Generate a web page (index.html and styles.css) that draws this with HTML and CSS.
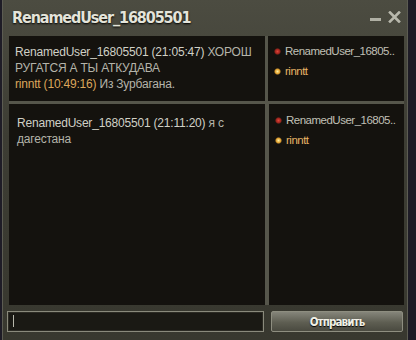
FILE: index.html
```html
<!DOCTYPE html>
<html lang="ru">
<head>
    <meta charset="UTF-8">
    <title>RenamedUser_16805501</title>
    <link rel="stylesheet" href="styles.css">
</head>
<body>
    <div class="window">
        <div class="titlebar">
            <div class="title">RenamedUser_16805501</div>
            <div class="controls">
                <span class="minimize"></span>
                <svg class="close" width="13" height="12" viewBox="0 0 13 12">
                    <path d="M2 1.5 L11 10.5 M11 1.5 L2 10.5" stroke="#b8b8ac" stroke-width="2.6" stroke-linecap="square"/>
                </svg>
            </div>
        </div>

        <div class="rooms">
            <!-- first room -->
            <div class="chat chat-top">
                <div class="msg"><span class="name">RenamedUser_16805501 (21:05:47)</span> ХОРОШ РУГАТСЯ А ТЫ АТКУДАВА</div>
                <div class="msg"><span class="name me">rinntt (10:49:16)</span> Из Зурбагана.</div>
            </div>
            <div class="users users-top">
                <div class="user"><span class="dot red"></span>RenamedUser_16805..</div>
                <div class="user me"><span class="dot gold"></span>rinntt</div>
            </div>

            <!-- second room -->
            <div class="chat chat-bottom">
                <div class="msg"><span class="name">RenamedUser_16805501 (21:11:20)</span> я с дагестана</div>
            </div>
            <div class="users users-bottom">
                <div class="user"><span class="dot red"></span>RenamedUser_16805..</div>
                <div class="user me"><span class="dot gold"></span>rinntt</div>
            </div>
        </div>

        <div class="footer">
            <div class="input"><span class="caret"></span></div>
            <button class="send">Отправить</button>
        </div>
    </div>
</body>
</html>
```

FILE: styles.css
```css
body {
    margin: 0;
    background: #1e1c26;
    font-family: "Liberation Sans", Arial, sans-serif;
    overflow: hidden;
}

.window {
    width: 406px;
    height: 340px;
    margin-left: 2px;
    box-sizing: border-box;
    padding: 0 3px 0 5px;
    background: linear-gradient(#4c4c41, #3d3d34 40%, #38382f);
    border-left: 1px solid #5c5c52;
    border-right: 1px solid #5c5c52;
}

.titlebar {
    height: 36px;
    display: flex;
    align-items: center;
    justify-content: space-between;
    padding-left: 4px;
}

.title {
    font-family: "DejaVu Sans", sans-serif;
    font-stretch: condensed;
    font-weight: bold;
    font-size: 16px;
    letter-spacing: -1.1px;
    color: #e4e4da;
    text-shadow: 0 1px 2px #000;
    margin-top: -1px;
}

.controls {
    display: flex;
    align-items: flex-end;
    gap: 7px;
    padding-right: 3px;
    margin-top: -2px;
}

.minimize {
    width: 11px;
    height: 3px;
    background: #b0b0a4;
    margin-bottom: 2px;
}

.rooms {
    display: grid;
    grid-template-columns: 256px 1fr;
    grid-template-rows: 65px 201px;
    column-gap: 3px;
    row-gap: 3px;
    background: #56564b;
    margin-left: 1px;
}

.chat, .users {
    background: #14120e;
    box-sizing: border-box;
}

.chat {
    font-size: 12px;
    letter-spacing: -0.2px;
    line-height: 16px;
    color: #b4b4aa;
    padding: 8px 2px 0 6px;
}

.chat-bottom {
    padding: 11px 6px 0 8px;
}

.name {
    color: #d0d0c6;
}

.name.me {
    color: #dca65c;
}

.users {
    padding: 5px 2px 0 6px;
    font-size: 11.5px;
    letter-spacing: -0.5px;
    color: #c0c0b6;
}

.users-bottom {
    padding-top: 6px;
    margin-left: 1px;
}

.user {
    display: flex;
    align-items: center;
    height: 20px;
    white-space: nowrap;
}

.user.me {
    color: #e6b466;
}

.dot {
    width: 7px;
    height: 7px;
    border-radius: 50%;
    margin-right: 4px;
    flex-shrink: 0;
}

.dot.red {
    background: radial-gradient(circle, #e0453a 0, #a0261e 45%, rgba(80, 20, 10, 0) 75%);
}

.dot.gold {
    background: radial-gradient(circle, #fff0a0 0, #e0a030 45%, rgba(120, 70, 10, 0) 75%);
}

.footer {
    display: flex;
    gap: 7px;
    margin-top: 6px;
    height: 21px;
}

.input {
    width: 257px;
    box-sizing: border-box;
    border: 1px solid #8a8a7c;
    background: #1a1914;
    box-shadow: inset 0 0 0 1px #2c2b24;
    padding: 3px 5px;
    margin-left: -1px;
}

.caret {
    display: block;
    width: 1px;
    height: 12px;
    background: #b8b8ac;
}

.send {
    flex: 1;
    margin-right: 1px;
    border: 1px solid #8e8e80;
    border-radius: 2px;
    background: linear-gradient(#85857a, #5e5e52 55%, #4a4a40);
    color: #f0f0e6;
    font-family: "DejaVu Sans", sans-serif;
    font-stretch: condensed;
    font-weight: bold;
    font-size: 11.5px;
    letter-spacing: -0.9px;
    text-shadow: 0 1px 1px #000;
    padding: 0;
}
```
